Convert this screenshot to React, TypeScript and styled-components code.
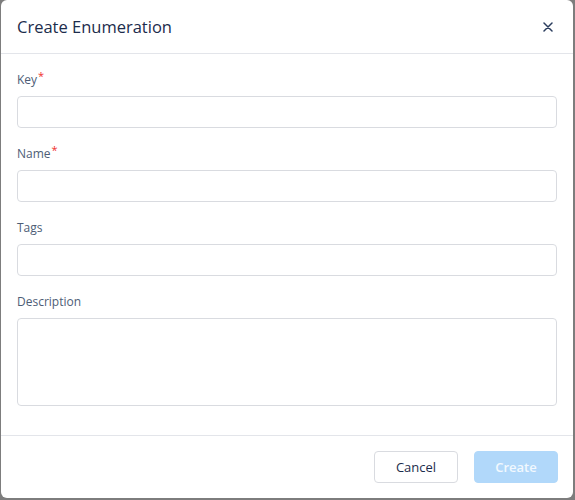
import React from "react";
import styled, { createGlobalStyle } from "styled-components";

const GlobalStyle = createGlobalStyle`
  html, body {
    margin: 0;
    padding: 0;
    background: #7d7d7d;
  }
  body {
    font-family: "Open Sans", "Noto Sans", sans-serif;
  }
`;

const Backdrop = styled.div`
  width: 575px;
  height: 500px;
  box-sizing: border-box;
  padding: 0 2px 2px 1px;
  background: #7d7d7d;
`;

const StyledDialog = styled.div`
  background: #ffffff;
  border-radius: 6px;
  height: 100%;
  display: flex;
  flex-direction: column;
  overflow: hidden;
`;

const StyledHeader = styled.div`
  display: flex;
  justify-content: space-between;
  align-items: center;
  height: 54px;
  box-sizing: border-box;
  padding: 0 16px 0 16px;
  border-bottom: 1px solid #e3e5ea;
`;

const StyledTitle = styled.h1`
  margin: 0;
  font-size: 16.5px;
  font-weight: 500;
  color: #1c2c4c;
`;

const StyledCloseButton = styled.button`
  border: none;
  background: none;
  padding: 4px;
  display: flex;
  cursor: pointer;
`;

const StyledBody = styled.div`
  flex: 1;
  padding: 16px 16px 0 16px;
`;

const StyledField = styled.div`
  margin-bottom: 16px;
`;

const StyledLabel = styled.label`
  display: block;
  font-size: 12px;
  line-height: 20px;
  color: #4d5d76;
  margin-bottom: 6px;
`;

const StyledRequired = styled.sup`
  color: #f0302c;
  font-size: 11px;
  margin-left: 1px;
  vertical-align: 4px;
  line-height: 0;
`;

const StyledInput = styled.input`
  display: block;
  width: 100%;
  box-sizing: border-box;
  height: 32px;
  border: 1px solid #d9dbe0;
  border-radius: 4px;
  outline: none;
  font-family: inherit;
  font-size: 13px;
  padding: 0 10px;
`;

const StyledTextArea = styled.textarea`
  display: block;
  width: 100%;
  box-sizing: border-box;
  height: 88px;
  border: 1px solid #d9dbe0;
  border-radius: 4px;
  outline: none;
  resize: none;
  font-family: inherit;
  font-size: 13px;
  padding: 6px 10px;
`;

const StyledFooter = styled.div`
  display: flex;
  justify-content: flex-end;
  gap: 16px;
  height: 63px;
  box-sizing: border-box;
  padding: 15px 15px 0 16px;
  border-top: 1px solid #e3e5ea;
`;

const StyledButton = styled.button<{ $primary?: boolean }>`
  height: 32px;
  width: 84px;
  border-radius: 4px;
  font-family: inherit;
  font-size: 13px;
  cursor: pointer;
  border: 1px solid ${(p) => (p.$primary ? "#b1d8fa" : "#d9dbe0")};
  background: ${(p) => (p.$primary ? "#b1d8fa" : "#ffffff")};
  color: ${(p) => (p.$primary ? "#f2f8fe" : "#1c2c4c")};
  font-weight: ${(p) => (p.$primary ? 600 : 400)};
`;

const CloseIcon = () => (
  <svg width="10" height="10" viewBox="0 0 10 10">
    <path d="M1 1L9 9M9 1L1 9" stroke="#2b3d5e" strokeWidth="1.5" strokeLinecap="round" />
  </svg>
);

type FieldProps = {
  label: string;
  required?: boolean;
  multiline?: boolean;
};

const Field = ({ label, required = false, multiline = false }: FieldProps) => (
  <StyledField>
    <StyledLabel>
      {label}
      {required && <StyledRequired>*</StyledRequired>}
    </StyledLabel>
    {multiline ? <StyledTextArea /> : <StyledInput />}
  </StyledField>
);

const App = () => {
  return (
    <Backdrop>
      <GlobalStyle />
      <StyledDialog>
        <StyledHeader>
          <StyledTitle>Create Enumeration</StyledTitle>
          <StyledCloseButton>
            <CloseIcon />
          </StyledCloseButton>
        </StyledHeader>
        <StyledBody>
          <Field label="Key" required />
          <Field label="Name" required />
          <Field label="Tags" />
          <Field label="Description" multiline />
        </StyledBody>
        <StyledFooter>
          <StyledButton>Cancel</StyledButton>
          <StyledButton $primary>Create</StyledButton>
        </StyledFooter>
      </StyledDialog>
    </Backdrop>
  );
};

export default App;
